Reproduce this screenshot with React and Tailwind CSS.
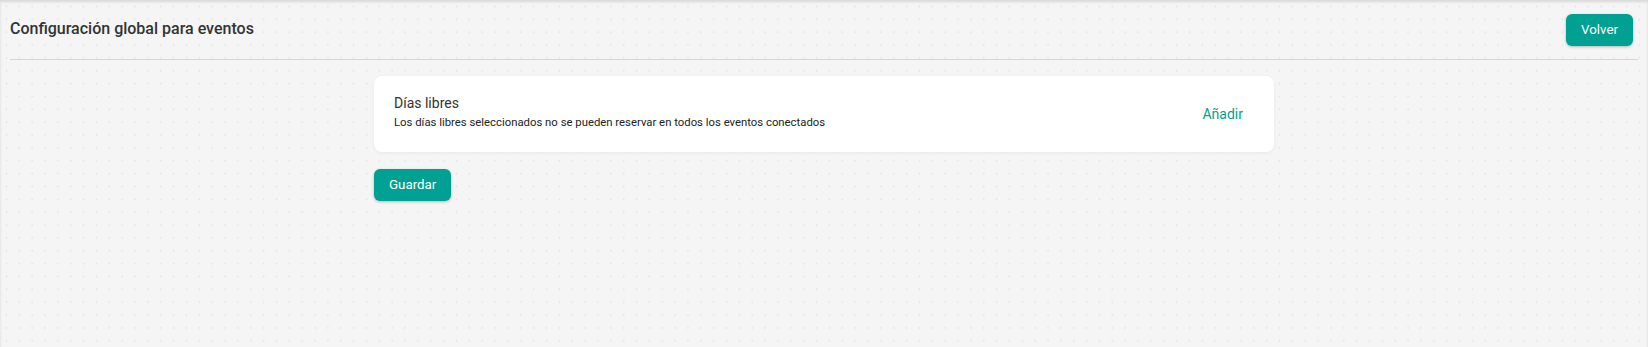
export default function App() {
  return (
    <div
      className="min-h-screen w-full bg-[#f5f5f5] bg-[radial-gradient(circle,#e4e4e4_0.8px,transparent_1.2px)] bg-[length:12.87px_12.87px] shadow-[inset_0_2px_3px_rgba(0,0,0,0.12)] px-[10px]"
      style={{ fontFamily: "Roboto, 'Noto Sans', sans-serif" }}
    >
      <div className="flex items-start justify-between border-b border-[#d6d6d6] pt-[14px] pb-[13px]">
        <h1 className="mt-[3px] text-[16px] leading-[24px] font-medium text-[#333333]">
          Configuración global para eventos
        </h1>
        <button className="mr-[5px] h-[32px] rounded-[6px] bg-[#00a192] px-[15px] text-[13.33px] text-white shadow-[0_1px_3px_rgba(0,0,0,0.25)]">
          Volver
        </button>
      </div>
      <div className="mx-auto mt-[16px] w-[900px] max-w-full">
        <div className="flex items-center justify-between rounded-[8px] bg-white pl-[20px] pr-[31px] pt-[17px] pb-[22px] shadow-[0_1px_4px_rgba(0,0,0,0.06)]">
          <div>
            <div className="text-[14px] leading-[20px] text-[#333333]">Días libres</div>
            <div className="mt-[1px] text-[11.34px] leading-[16px] text-[#222222]">
              Los días libres seleccionados no se pueden reservar en todos los eventos conectados
            </div>
          </div>
          <button className="mt-[4px] text-[14px] leading-[20px] text-[#00a192]">Añadir</button>
        </div>
        <button className="mt-[17px] h-[32px] rounded-[6px] bg-[#00a192] px-[15px] text-[13.33px] text-white shadow-[0_1px_3px_rgba(0,0,0,0.25)]">
          Guardar
        </button>
      </div>
    </div>
  );
}
